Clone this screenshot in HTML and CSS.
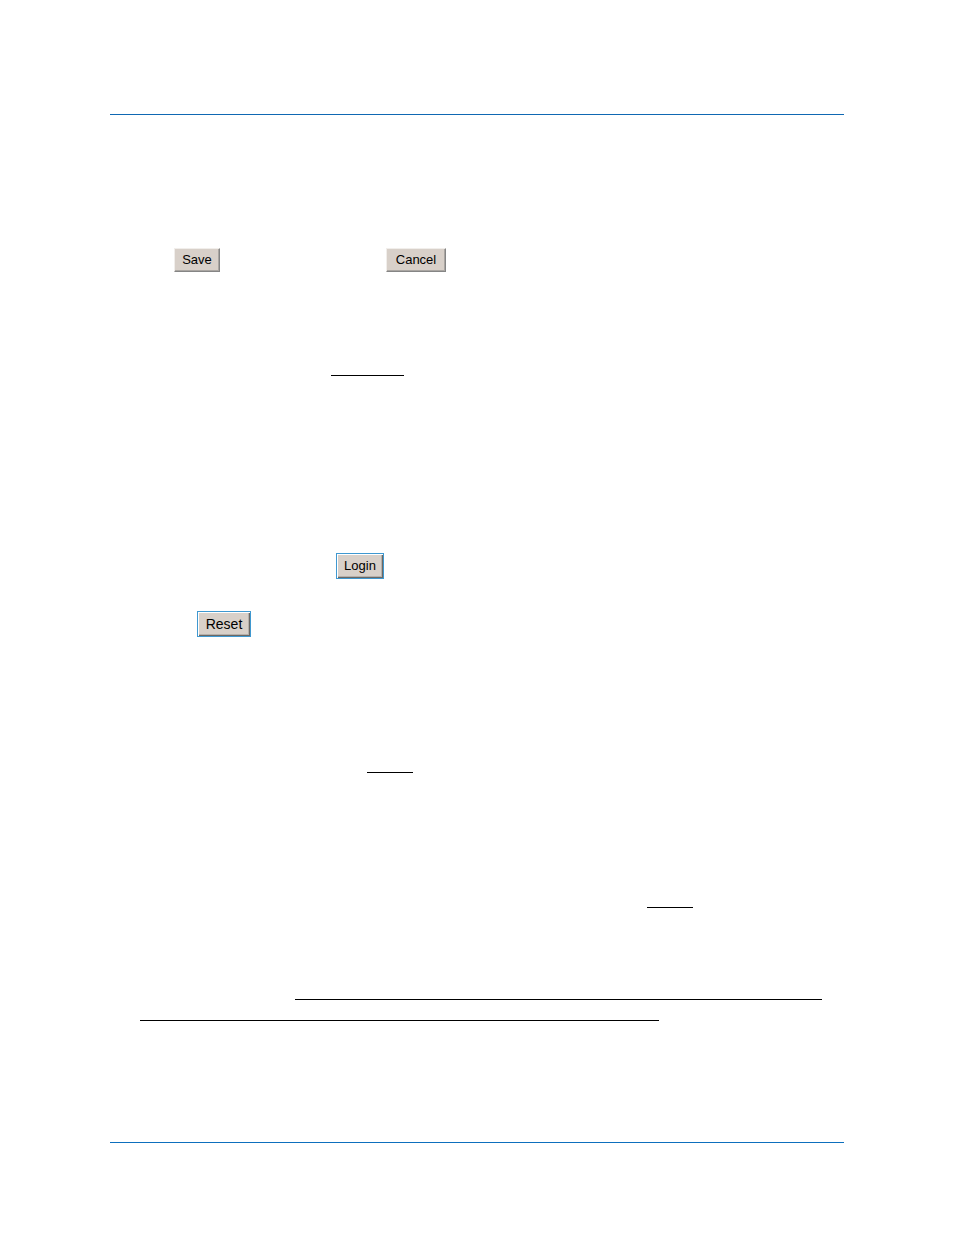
FILE: index.html
```html
<!DOCTYPE html>
<html lang="en">
<head>
    <meta charset="UTF-8">
    <meta name="viewport" content="width=device-width, initial-scale=1.0">
    <title>Save, Cancel, Login, Reset</title>
    <link rel="stylesheet" href="styles.css">
</head>
<body>
    <div class="page">
        <header class="page-header"></header>

        <main class="content">
            <div class="row save-row">
                <button type="button" class="btn save-btn">Save</button>
                <button type="button" class="btn cancel-btn">Cancel</button>
            </div>
            <hr class="line first-line">

            <div class="row login-row">
                <button type="button" class="btn framed">Login</button>
            </div>
            <div class="row reset-row">
                <button type="button" class="btn framed reset-btn">Reset</button>
            </div>

            <hr class="line short-line second-line">
            <hr class="line short-line third-line">

            <!-- two-line underline -->
            <hr class="line long-line">
            <hr class="line wrapped-line">
        </main>

        <footer class="page-footer"></footer>
    </div>
</body>
</html>
```

FILE: styles.css
```css
* {
    box-sizing: border-box;
}
body {
    margin: 0;
    background: white;
    font-family: "Liberation Sans", Arial, sans-serif;
}
.page {
    padding: 0 110px 92px;
}
.page-header {
    height: 115px;
    border-bottom: 1px solid #0f68b3;
}
.content {
    display: flex;
    flex-direction: column;
    padding: 133px 0 121px 30px;
}
.row {
    display: flex;
}
.btn {
    height: 24px;
    width: 46px;
    padding: 0;
    border: 1px solid;
    border-color: #f1eeeb #858585 #858585 #f1eeeb;
    border-radius: 0;
    box-shadow: inset -1px -1px #aaa6a2;
    background: #d8d0c9;
    color: black;
    font-family: inherit;
    font-size: 13px;
    line-height: 20px;
}
.save-row {
    gap: 166px;
    padding-left: 34px;
}
.cancel-btn {
    width: 60px;
}
.framed {
    width: 48px;
    height: 26px;
    border-color: #3f98d0;
    box-shadow: inset 1px 1px white, inset -1px -1px #6b6865, inset -2px -2px #b5b0ab;
}
.login-row {
    margin-top: 177px;
    padding-left: 196px;
}
.reset-row {
    margin-top: 32px;
    padding-left: 57px;
}
.reset-btn {
    width: 54px;
    font-size: 14px;
}
.line {
    height: 1px;
    margin: 0;
    border: none;
    background: black;
}
.first-line {
    width: 73px;
    margin-top: 103px;
    margin-left: 191px;
}
.short-line {
    width: 46px;
}
.second-line {
    margin-top: 135px;
    margin-left: 227px;
}
.third-line {
    margin-top: 134px;
    margin-left: 507px;
}
.long-line {
    margin: 91px 22px 0 155px;
}
.wrapped-line {
    margin: 20px 185px 0 0;
}
.page-footer {
    border-top: 1px solid #0d6fbd;
}
```
